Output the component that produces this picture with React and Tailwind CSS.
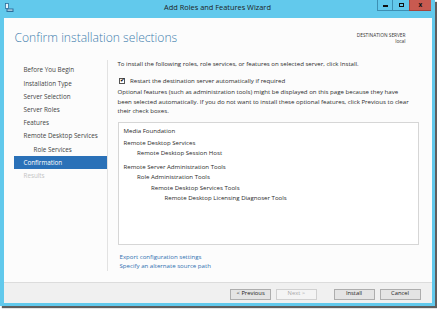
import React from 'react';

const NAV = [
  { label: 'Before You Begin' },
  { label: 'Installation Type' },
  { label: 'Server Selection' },
  { label: 'Server Roles' },
  { label: 'Features' },
  { label: 'Remote Desktop Services' },
  { label: 'Role Services', indent: true },
  { label: 'Confirmation', active: true },
  { label: 'Results', disabled: true },
];

const GROUPS = [
  [['Media Foundation', 0]],
  [['Remote Desktop Services', 0], ['Remote Desktop Session Host', 1]],
  [
    ['Remote Server Administration Tools', 0],
    ['Role Administration Tools', 1],
    ['Remote Desktop Services Tools', 2],
    ['Remote Desktop Licensing Diagnoser Tools', 3],
  ],
];

const INDENTS = ['pl-[5px]', 'pl-[18.5px]', 'pl-[32.5px]', 'pl-[46px]'];

function WizardIcon() {
  return (
    <svg width="9" height="10" viewBox="0 0 9 10">
      <rect x="0.5" y="0.5" width="3" height="5" fill="#e8f4fb" stroke="#2d6f9c" strokeWidth="0.8" />
      <rect x="1.5" y="5.5" width="7" height="3.5" fill="#2d6f9c" />
      <rect x="2.5" y="6.5" width="5" height="1.2" fill="#cfe8f6" />
    </svg>
  );
}

function Button({ children, disabled }) {
  return (
    <div
      className={`w-[41px] h-[11px] flex items-center justify-center border text-[5.8px] leading-none ${
        disabled ? 'border-[#d0d0d0] bg-[#f4f4f4] text-[#a8a8a8]' : 'border-[#adadad] bg-[#e4e4e4] text-[#222]'
      }`}
    >
      {children}
    </div>
  );
}

export default function App() {
  return (
    <div className="w-[437px] h-[311px] bg-white font-['Open_Sans',sans-serif] text-[#333]">
      <div className="w-[435px] h-[306px] bg-[#62c9ec] flex flex-col shadow-[2px_2px_1px_rgba(40,40,40,0.75)]">
        {/* Title bar */}
        <div className="relative h-[17.5px] flex items-start justify-center shrink-0">
          <div className="absolute left-[5px] top-[3px]">
            <WizardIcon />
          </div>
          <div className="pt-[3px] text-[7.4px] leading-[9px] text-[#1d1d1d]">Add Roles and Features Wizard</div>
          <div className="absolute right-[4px] top-0 flex h-[11px]">
            <div className="w-[15px] h-full flex items-end justify-center pb-[3.5px] border-l border-b border-[#3d8fb3]">
              <div className="w-[5px] h-[1.5px] bg-[#111]" />
            </div>
            <div className="w-[17px] h-full flex items-center justify-center border-l border-b border-[#3d8fb3]">
              <div className="w-[5px] h-[4.5px] border-[1.2px] border-[#111]" />
            </div>
            <div className="w-[22px] h-full flex items-center justify-center bg-[#c85a50] border-b border-l border-[#a4443c] text-[6.5px] font-bold text-[#111] leading-none">
              x
            </div>
          </div>
        </div>

        {/* Client area */}
        <div className="flex-1 mx-[3.5px] mb-[2.7px] bg-[#fcfcfc] flex flex-col">
          {/* Header */}
          <div className="flex justify-between h-[40.5px] shrink-0 pl-[11px] pr-[26px]">
            <div className="pt-[12px] text-[12.1px] leading-[16px] font-light text-[#3f7fae]">
              Confirm installation selections
            </div>
            <div className="pt-[15.5px] text-right text-[4.8px] leading-[5.7px] text-[#333]">
              <div>DESTINATION SERVER</div>
              <div>local</div>
            </div>
          </div>

          {/* Body */}
          <div className="flex flex-1">
            {/* Nav */}
            <div className="w-[104.5px] shrink-0 pl-[10px] pt-[3.5px] pb-[11px] border-r border-[#e2e2e2] mb-[11px] mt-[2px]">
              {NAV.map((item) => (
                <div
                  key={item.label}
                  className={`h-[13.2px] flex items-center text-[6.3px] ${item.indent ? 'pl-[20px]' : 'pl-[10px]'} ${
                    item.active ? 'bg-[#2a71b8] text-white' : item.disabled ? 'text-[#c4c4c4]' : 'text-[#444]'
                  }`}
                >
                  {item.label}
                </div>
              ))}
            </div>

            {/* Content */}
            <div className="flex-1 pl-[9.5px] pr-[12.5px] text-[6.1px] leading-[9.5px] text-[#2b2b2b]">
              <div className="pt-[1px]">
                To install the following roles, role services, or features on selected server, click Install.
              </div>
              <div className="flex items-center gap-[5px] mt-[7.5px] pl-[1.5px]">
                <div className="w-[6px] h-[6px] border border-[#555] bg-white flex items-center justify-center text-[5.5px] leading-none text-[#111]">
                  ✔
                </div>
                <div>Restart the destination server automatically if required</div>
              </div>
              <div className="mt-[1.5px] whitespace-nowrap">
                Optional features (such as administration tools) might be displayed on this page because they have
                <br />
                been selected automatically. If you do not want to install these optional features, click Previous to clear
                <br />
                their check boxes.
              </div>
              <div className="mt-[6.5px] h-[122.5px] border border-[#d6d6d6] bg-white pt-[3px] leading-[10.3px]">
                {GROUPS.map((group, gi) => (
                  <div key={gi} className={gi === 0 ? '' : gi === 1 ? 'mt-[1.3px]' : 'mt-[4px]'}>
                    {group.map(([label, level]) => (
                      <div key={label} className={INDENTS[level]}>
                        {label}
                      </div>
                    ))}
                  </div>
                ))}
              </div>
              <div className="mt-[8.5px] pl-[2px] leading-[8.7px] text-[#2f6fb0]">
                <div>Export configuration settings</div>
                <div>Specify an alternate source path</div>
              </div>
            </div>
          </div>

          {/* Footer */}
          <div className="h-[21.6px] shrink-0 bg-[#f0f0f0] border-t border-[#dcdcdc] flex items-start justify-end pt-[6px] pr-[11px]">
            <div className="flex gap-[4.7px]">
              <Button>&lt; Previous</Button>
              <Button disabled>Next &gt;</Button>
            </div>
            <div className="flex gap-[5px] ml-[16.7px]">
              <Button>Install</Button>
              <Button>Cancel</Button>
            </div>
          </div>
        </div>
      </div>
    </div>
  );
}
